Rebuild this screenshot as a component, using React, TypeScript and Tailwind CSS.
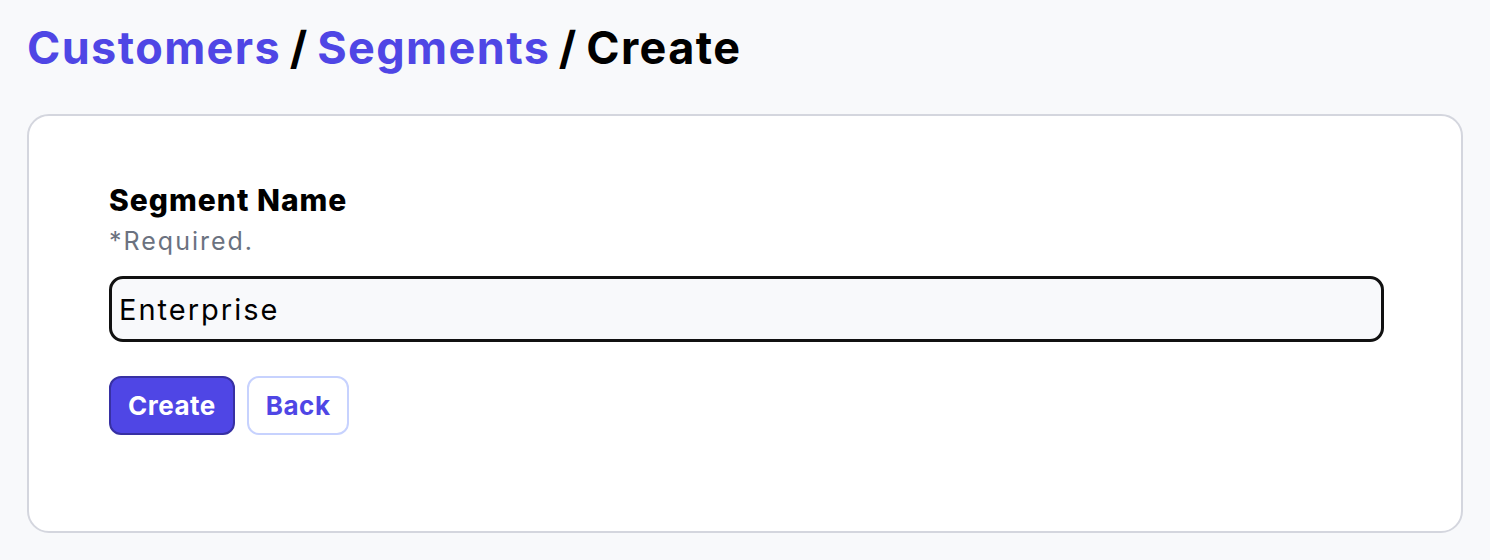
import { useEffect, useRef, useState } from 'react';

// Segment create page: breadcrumb title, then a card holding the form.
export default function App() {
    const [name, setName] = useState('Enterprise');
    const inputRef = useRef<HTMLInputElement>(null);

    // focus the name field with the caret at the end
    useEffect(() => {
        const el = inputRef.current;
        if (!el) return;
        el.focus();
        el.setSelectionRange(el.value.length, el.value.length);
    }, []);

    return (
        <div className="min-h-[560px] bg-[#f8f9fb] px-[27px] pt-[20px] font-['Inter',sans-serif]">
            <h1 className="text-[45px] font-bold leading-[56px] tracking-[1.4px] text-black [word-spacing:-3.5px]">
                <a href="#" className="text-[#4f46e5]">Customers</a>
                <span> / </span>
                <a href="#" className="text-[#4f46e5]">Segments</a>
                <span> / Create</span>
            </h1>

            <div className="mt-[38px] rounded-[22px] border-2 border-[#d4d6de] bg-white px-[80px] pb-[96px] pt-[66px]">
                <label htmlFor="segment-name" className="block text-[30px] font-extrabold leading-[36px] tracking-[1px] text-black">
                    Segment Name
                </label>
                <p className="mt-[7px] text-[25px] leading-[32px] tracking-[2px] text-[#6b7280]">*Required.</p>

                <input
                    id="segment-name"
                    ref={inputRef}
                    value={name}
                    onChange={(e) => setName(e.target.value)}
                    className="mt-[19px] block h-[66px] w-[1275px] rounded-[14px] border-[3px] border-[#111111] bg-[#f8f9fb] px-[7px] text-[29px] tracking-[2px] text-black caret-black outline-none"
                />

                <div className="mt-[34px] flex gap-[12px]">
                    <button className="h-[59px] rounded-[12px] border-2 border-[#3730a3] bg-[#4f46e5] px-[17px] text-[26px] font-bold tracking-[0.5px] text-white">
                        Create
                    </button>
                    <button className="h-[59px] rounded-[12px] border-2 border-[#c7d2fe] bg-white px-[17px] text-[26px] font-bold tracking-[0.5px] text-[#4f46e5]">
                        Back
                    </button>
                </div>
            </div>
        </div>
    );
}
